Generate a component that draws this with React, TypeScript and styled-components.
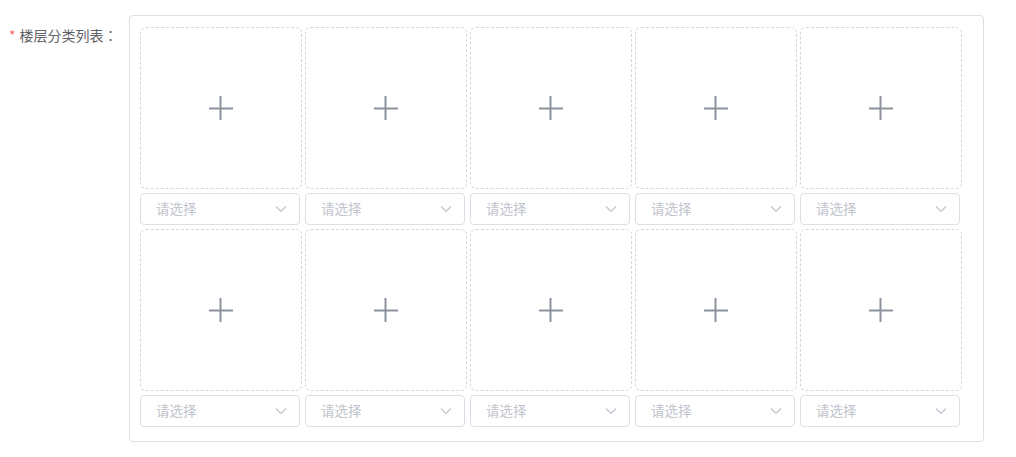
import React from "react";
import styled, { createGlobalStyle } from "styled-components";

const Global = createGlobalStyle`
  html, body { margin: 0; padding: 0; background: #fff; }
  body { font-family: "Noto Sans CJK SC", "Noto Sans", sans-serif; }
`;

const FormItem = styled.div`
  display: flex;
  align-items: flex-start;
  padding-top: 15px;
`;

const Label = styled.label`
  width: 129px;
  box-sizing: border-box;
  padding-left: 9px;
  line-height: 40px;
  font-size: 14px;
  color: #606266;
  white-space: nowrap;
`;

const Star = styled.span`
  color: #f56c6c;
  margin-right: 4px;
`;

const Colon = styled.span`
  font-family: "Noto Sans CJK TC", "Noto Sans CJK SC", sans-serif;
`;

const Panel = styled.div`
  width: 855px;
  box-sizing: border-box;
  border: 1px solid #dcdfe6;
  border-radius: 4px;
  padding: 11px 21px 14px 10px;
`;

const Grid = styled.div`
  display: grid;
  grid-template-columns: repeat(5, 162px);
  column-gap: 3px;
  row-gap: 4px;
`;

const Cell = styled.div`
  display: flex;
  flex-direction: column;
  gap: 4px;
`;

const Card = styled.div`
  width: 162px;
  height: 162px;
  box-sizing: border-box;
  border: 1px dashed #d6d7db;
  border-radius: 6px;
  background: #fff;
  display: flex;
  align-items: center;
  justify-content: center;
  color: #8c939d;
  cursor: pointer;
`;

const Select = styled.div`
  width: 160px;
  height: 32px;
  box-sizing: border-box;
  border: 1px solid #dcdfe6;
  border-radius: 4px;
  display: flex;
  align-items: center;
  justify-content: space-between;
  padding: 0 12px 0 15px;
  font-size: 13.5px;
  line-height: 30px;
  color: #c0c4cc;
`;

const SelectText = styled.span`
  position: relative;
  top: -1px;
`;

const Plus = () => (
  <svg width="26" height="26" viewBox="0 0 26 26">
    <path d="M1 13.5h24M12.5 1v24" stroke="#8c939d" strokeWidth="2" fill="none" />
  </svg>
);

const Chevron = () => (
  <svg width="12" height="8" viewBox="0 0 12 8">
    <path d="M1 1.5l5 5 5-5" stroke="#c0c4cc" strokeWidth="1.2" fill="none" />
  </svg>
);

export default function App() {
  const items = Array.from({ length: 10 }, (_, i) => i);
  return (
    <>
      <Global />
      <FormItem>
        <Label>
          <Star>*</Star>楼层分类列表<Colon>：</Colon>
        </Label>
        <Panel>
          <Grid>
            {items.map((i) => (
              <Cell key={i}>
                <Card>
                  <Plus />
                </Card>
                <Select>
                  <SelectText>请选择</SelectText>
                  <Chevron />
                </Select>
              </Cell>
            ))}
          </Grid>
        </Panel>
      </FormItem>
    </>
  );
}
